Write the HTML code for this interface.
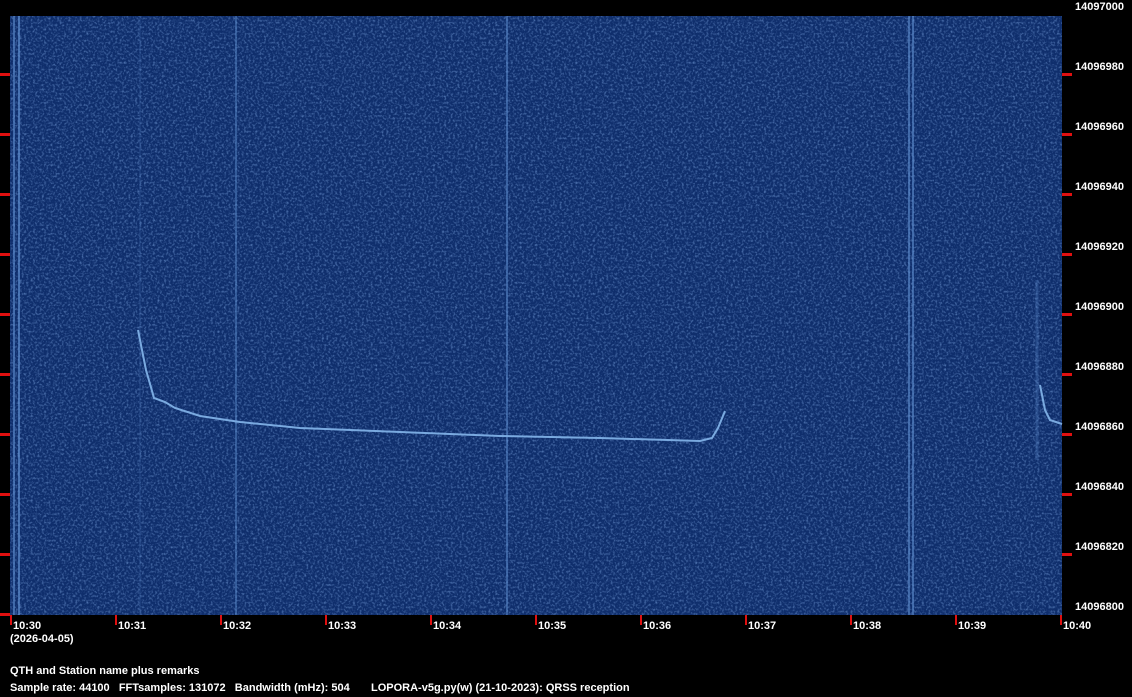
<!DOCTYPE html><html><head><style>
body{margin:0;background:#000;width:1132px;height:697px;overflow:hidden;position:relative;font-family:"Liberation Sans",sans-serif;font-weight:bold;font-size:11px;color:#fff}
.t{position:absolute;white-space:nowrap;line-height:12px}
</style></head><body>
<svg width="1132" height="697" style="position:absolute;left:0;top:0">
<defs><filter id="n" x="0" y="0" width="100%" height="100%"><feTurbulence type="fractalNoise" baseFrequency="0.45" numOctaves="2" seed="3"/><feColorMatrix type="matrix" values="0 0 0 0 0.25  0 0 0 0 0.45  0 0 0 0 0.85  0 0 0 2 -0.9"/></filter></defs>
<rect x="10" y="16" width="1052" height="599" fill="#0f2e6c"/>
<rect x="10" y="16" width="1052" height="599" filter="url(#n)" opacity="0.6"/>
<g stroke="#5f8fd0" fill="none">
<line x1="14" y1="16" x2="14" y2="615" stroke-width="1.5" opacity=".8"/>
<line x1="19" y1="16" x2="19" y2="615" stroke-width="1.5" opacity=".9"/>
<line x1="140" y1="16" x2="140" y2="615" stroke-width="1" opacity=".3"/>
<line x1="236" y1="16" x2="236" y2="615" stroke-width="1.5" opacity=".6"/>
<line x1="507" y1="16" x2="507" y2="615" stroke-width="1.5" opacity=".7"/>
<line x1="909" y1="16" x2="909" y2="615" stroke-width="1.5" opacity=".8"/>
<line x1="913" y1="16" x2="913" y2="615" stroke-width="1.5" opacity=".8"/>
<line x1="1037" y1="280" x2="1037" y2="460" stroke-width="3" opacity=".3"/>
<polyline stroke="#7aaae0" stroke-width="2" points="138,330 146,370 154,398 165,402 175,408 200,416 240,422 300,428 400,432 500,436 600,438 700,441 712,438 718,428 725,411"/>
<polyline stroke="#7aaae0" stroke-width="2" points="1040,385 1045,410 1050,420 1062,424"/>
</g>
<g fill="#e01010">
<rect x="1062" y="73" width="10" height="3"/><rect x="0" y="73" width="10" height="3"/>
<rect x="1062" y="133" width="10" height="3"/><rect x="0" y="133" width="10" height="3"/>
<rect x="1062" y="193" width="10" height="3"/><rect x="0" y="193" width="10" height="3"/>
<rect x="1062" y="253" width="10" height="3"/><rect x="0" y="253" width="10" height="3"/>
<rect x="1062" y="313" width="10" height="3"/><rect x="0" y="313" width="10" height="3"/>
<rect x="1062" y="373" width="10" height="3"/><rect x="0" y="373" width="10" height="3"/>
<rect x="1062" y="433" width="10" height="3"/><rect x="0" y="433" width="10" height="3"/>
<rect x="1062" y="493" width="10" height="3"/><rect x="0" y="493" width="10" height="3"/>
<rect x="1062" y="553" width="10" height="3"/><rect x="0" y="553" width="10" height="3"/>
<rect x="0" y="613" width="10" height="3"/>
<rect x="10" y="615" width="2" height="10"/><rect x="115" y="615" width="2" height="10"/><rect x="220" y="615" width="2" height="10"/><rect x="325" y="615" width="2" height="10"/><rect x="430" y="615" width="2" height="10"/><rect x="535" y="615" width="2" height="10"/><rect x="640" y="615" width="2" height="10"/><rect x="745" y="615" width="2" height="10"/><rect x="850" y="615" width="2" height="10"/><rect x="955" y="615" width="2" height="10"/><rect x="1060" y="615" width="2" height="10"/>
</g>
</svg>
<div class="t" style="left:1075px;top:1px">14097000</div>
<div class="t" style="left:1075px;top:61px">14096980</div>
<div class="t" style="left:1075px;top:121px">14096960</div>
<div class="t" style="left:1075px;top:181px">14096940</div>
<div class="t" style="left:1075px;top:241px">14096920</div>
<div class="t" style="left:1075px;top:301px">14096900</div>
<div class="t" style="left:1075px;top:361px">14096880</div>
<div class="t" style="left:1075px;top:421px">14096860</div>
<div class="t" style="left:1075px;top:481px">14096840</div>
<div class="t" style="left:1075px;top:541px">14096820</div>
<div class="t" style="left:1075px;top:601px">14096800</div>
<div class="t" style="left:13px;top:620px">10:30</div>
<div class="t" style="left:118px;top:620px">10:31</div>
<div class="t" style="left:223px;top:620px">10:32</div>
<div class="t" style="left:328px;top:620px">10:33</div>
<div class="t" style="left:433px;top:620px">10:34</div>
<div class="t" style="left:538px;top:620px">10:35</div>
<div class="t" style="left:643px;top:620px">10:36</div>
<div class="t" style="left:748px;top:620px">10:37</div>
<div class="t" style="left:853px;top:620px">10:38</div>
<div class="t" style="left:958px;top:620px">10:39</div>
<div class="t" style="left:1063px;top:620px">10:40</div>
<div class="t" style="left:10px;top:633px">(2026-04-05)</div>
<div class="t" style="left:10px;top:665px">QTH and Station name plus remarks</div>
<div class="t" style="left:10px;top:682px">Sample rate: 44100&nbsp;&nbsp;&nbsp;FFTsamples: 131072&nbsp;&nbsp;&nbsp;Bandwidth (mHz): 504</div>
<div class="t" style="left:371px;top:682px">LOPORA-v5g.py(w) (21-10-2023): QRSS reception</div>
</body></html>
